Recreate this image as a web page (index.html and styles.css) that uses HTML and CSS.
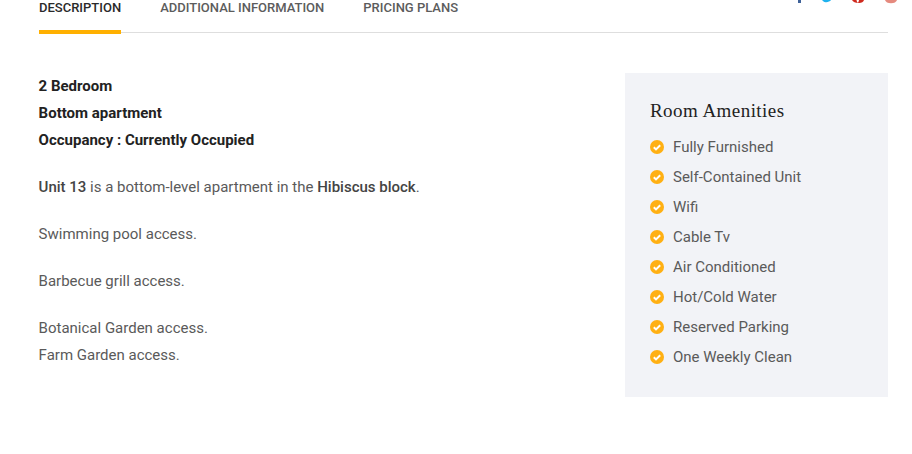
FILE: index.html
```html
<!DOCTYPE html>
<html lang="en">
<head>
<meta charset="utf-8">
<title>Room</title>
<link rel="stylesheet" href="styles.css">
</head>
<body>
<div class="page">
  <nav class="tabs">
    <a class="tab active">DESCRIPTION</a>
    <a class="tab">ADDITIONAL INFORMATION</a>
    <a class="tab">PRICING PLANS</a>
    <div class="social">
      <svg class="soc" viewBox="0 0 3 4" width="3" height="4"><rect x="0" y="0" width="3" height="3" fill="#3f6299"/></svg>
      <svg class="soc" viewBox="0 0 9 4" width="9" height="4"><path fill="#1fb2ee" d="M0 0H9C8 1.500 5.500 2.500 3.500 2.200C2 2 1 1 0 0Z"/></svg>
      <svg class="soc" viewBox="0 0 12 4" width="12" height="4"><path fill="#cf2a1e" d="M0 0H12C11.500 2 9 3.300 6.500 3C4.500 3.300 1 2 0 0Z"/><path fill="#fff" d="M4.500 0H7L6.300 2.400H5.200Z"/></svg>
      <svg class="soc" viewBox="0 0 12 4" width="12" height="4"><path fill="#e58a7e" d="M0 0H12C11.500 2 9 3.300 6 3.300C3 3.300 .5 2 0 0Z"/></svg>
    </div>
  </nav>
  <main class="content">
    <section class="desc">
      <div class="lead">
        <p>2 Bedroom</p>
        <p>Bottom apartment</p>
        <p>Occupancy : Currently Occupied</p>
      </div>
      <p class="para"><strong>Unit 13</strong> is a bottom-level apartment in the <strong>Hibiscus block</strong>.</p>
      <p class="para">Swimming pool access.</p>
      <p class="para">Barbecue grill access.</p>
      <p class="para">Botanical Garden access.<br>Farm Garden access.</p>
    </section>
    <aside class="amen">
      <h3>Room Amenities</h3>
      <ul>
        <li><svg class="chk" viewBox="0 0 14 14"><circle cx="7" cy="7" r="7"/><path d="M3.800 7.200L6 9.400L10.200 5.200"/></svg>Fully Furnished</li>
        <li><svg class="chk" viewBox="0 0 14 14"><circle cx="7" cy="7" r="7"/><path d="M3.800 7.200L6 9.400L10.200 5.200"/></svg>Self-Contained Unit</li>
        <li><svg class="chk" viewBox="0 0 14 14"><circle cx="7" cy="7" r="7"/><path d="M3.800 7.200L6 9.400L10.200 5.200"/></svg>Wifi</li>
        <li><svg class="chk" viewBox="0 0 14 14"><circle cx="7" cy="7" r="7"/><path d="M3.800 7.200L6 9.400L10.200 5.200"/></svg>Cable Tv</li>
        <li><svg class="chk" viewBox="0 0 14 14"><circle cx="7" cy="7" r="7"/><path d="M3.800 7.200L6 9.400L10.200 5.200"/></svg>Air Conditioned</li>
        <li><svg class="chk" viewBox="0 0 14 14"><circle cx="7" cy="7" r="7"/><path d="M3.800 7.200L6 9.400L10.200 5.200"/></svg>Hot/Cold Water</li>
        <li><svg class="chk" viewBox="0 0 14 14"><circle cx="7" cy="7" r="7"/><path d="M3.800 7.200L6 9.400L10.200 5.200"/></svg>Reserved Parking</li>
        <li><svg class="chk" viewBox="0 0 14 14"><circle cx="7" cy="7" r="7"/><path d="M3.800 7.200L6 9.400L10.200 5.200"/></svg>One Weekly Clean</li>
      </ul>
    </aside>
  </main>
</div>
</body>
</html>
```
FILE: styles.css
```css
* { box-sizing: border-box; }
html, body { margin: 0; padding: 0; background: #fff; overflow: hidden; }
body { width: 912px; height: 454px; font-family: Roboto, sans-serif; color: #5a5a5a; }
.page { padding: 0 24px 0 39px; }
.tabs { display: flex; align-items: flex-start; height: 33px; border-bottom: 1px solid #dedede; gap: 39px; }
.tab { font-size: 13px; font-weight: 500; line-height: 15px; height: 34px; color: #5c5c5c; }
.tab.active { color: #2a2a2a; border-bottom: 4px solid #ffb000; }
.social { margin-left: auto; margin-right: -9px; display: flex; gap: 21px; align-items: flex-start; }
.soc { display: block; }
.content { display: flex; justify-content: space-between; align-items: flex-start; padding-top: 40px; }
.desc { font-size: 15px; line-height: 27px; margin-left: -0.4px; }
.desc p { margin: 0; }
.lead { color: #222; }
.lead p { font-weight: 700; }
.desc .para { margin-top: 20px; }
.para strong { font-weight: 500; color: #444; }
.amen { width: 263px; height: 324px; background: #f2f3f7; padding: 25px 25px 0; }
.amen h3 { margin: 0 0 8px; font-family: "Liberation Serif", serif; font-weight: 400; font-size: 19px; line-height: 26px; letter-spacing: 0.45px; color: #222; }
.amen ul { list-style: none; margin: 0; padding: 0; }
.amen li { display: flex; align-items: center; height: 30px; font-size: 15px; color: #5a5a5a; gap: 9px; }
.chk { width: 14px; height: 14px; flex: none; }
.chk circle { fill: #ffb013; }
.chk path { fill: none; stroke: #fff; stroke-width: 2; }
```
